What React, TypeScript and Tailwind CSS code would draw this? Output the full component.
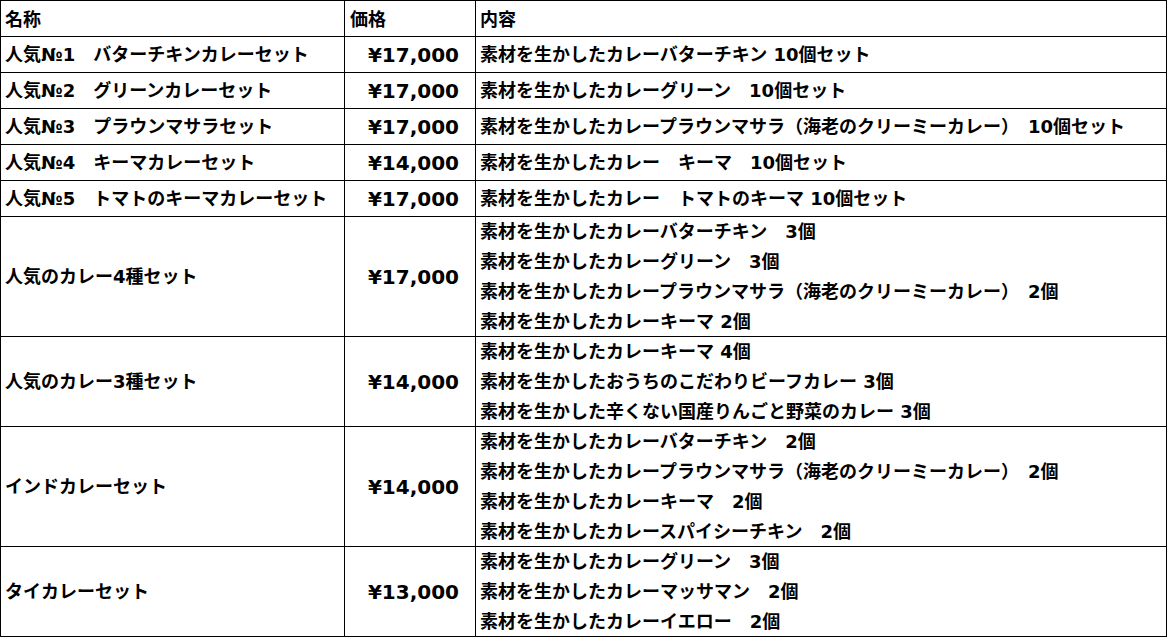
const rows: { name: string; price: string; items: string[] }[] = [
  { name: "人気№1　バターチキンカレーセット", price: "¥17,000", items: ["素材を生かしたカレーバターチキン 10個セット"] },
  { name: "人気№2　グリーンカレーセット", price: "¥17,000", items: ["素材を生かしたカレーグリーン　10個セット"] },
  { name: "人気№3　プラウンマサラセット", price: "¥17,000", items: ["素材を生かしたカレープラウンマサラ（海老のクリーミーカレー）　10個セット"] },
  { name: "人気№4　キーマカレーセット", price: "¥14,000", items: ["素材を生かしたカレー　キーマ　10個セット"] },
  { name: "人気№5　トマトのキーマカレーセット", price: "¥17,000", items: ["素材を生かしたカレー　トマトのキーマ 10個セット"] },
  {
    name: "人気のカレー4種セット",
    price: "¥17,000",
    items: [
      "素材を生かしたカレーバターチキン　3個",
      "素材を生かしたカレーグリーン　3個",
      "素材を生かしたカレープラウンマサラ（海老のクリーミーカレー）　2個",
      "素材を生かしたカレーキーマ 2個",
    ],
  },
  {
    name: "人気のカレー3種セット",
    price: "¥14,000",
    items: [
      "素材を生かしたカレーキーマ 4個",
      "素材を生かしたおうちのこだわりビーフカレー 3個",
      "素材を生かした辛くない国産りんごと野菜のカレー 3個",
    ],
  },
  {
    name: "インドカレーセット",
    price: "¥14,000",
    items: [
      "素材を生かしたカレーバターチキン　2個",
      "素材を生かしたカレープラウンマサラ（海老のクリーミーカレー）　2個",
      "素材を生かしたカレーキーマ　2個",
      "素材を生かしたカレースパイシーチキン　2個",
    ],
  },
  {
    name: "タイカレーセット",
    price: "¥13,000",
    items: [
      "素材を生かしたカレーグリーン　3個",
      "素材を生かしたカレーマッサマン　2個",
      "素材を生かしたカレーイエロー　2個",
    ],
  },
];

const rowHeight = (n: number) => (n === 1 ? "h-[36px]" : n === 4 ? "h-[120px]" : "h-[90px]");
const boxHeight = (n: number) => (n === 1 ? "h-[34px]" : n === 4 ? "h-[118px]" : "h-[88px]");

export default function App() {
  return (
    <div className="w-[1168px] h-[638px] bg-white text-black font-bold text-[18px] font-['DejaVu_Sans','Noto_Sans_CJK_JP',sans-serif]">
      <table className="table-fixed border-collapse w-[1166px]">
        <colgroup>
          <col className="w-[344px]" />
          <col className="w-[131px]" />
          <col className="w-[691px]" />
        </colgroup>
        <thead>
          <tr className="h-[36px]">
            <th className="border border-black text-left font-bold p-0 pl-[4px] pt-[1px] align-middle">名称</th>
            <th className="border border-black text-left font-bold p-0 pl-[5px] pt-[1px] align-middle">価格</th>
            <th className="border border-black text-left font-bold p-0 pl-[4px] pt-[1px] align-middle">内容</th>
          </tr>
        </thead>
        <tbody>
          {rows.map((r) => (
            <tr key={r.name} className={rowHeight(r.items.length)}>
              <td className="border border-black p-0 pl-[4px] align-middle whitespace-nowrap">{r.name}</td>
              <td className="border border-black p-0 pr-[16px] text-right align-middle text-[20px]">{r.price}</td>
              <td className="border border-black p-0 pl-[4px] align-middle">
                <div className={`${boxHeight(r.items.length)} flex flex-col justify-center`}>
                  {r.items.map((t) => (
                    <div key={t} className="leading-[30px] shrink-0 whitespace-nowrap">
                      {t}
                    </div>
                  ))}
                </div>
              </td>
            </tr>
          ))}
        </tbody>
      </table>
    </div>
  );
}
